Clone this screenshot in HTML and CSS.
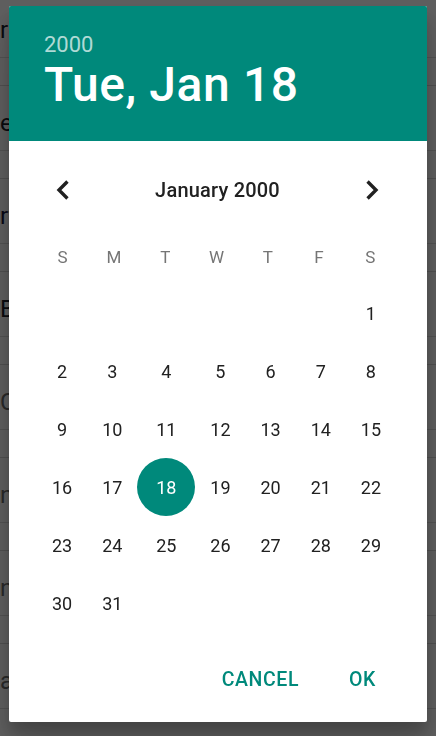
FILE: index.html
```html
<!DOCTYPE html>
<html lang="en">
<head>
    <meta charset="UTF-8">
    <meta name="viewport" content="width=device-width, initial-scale=1.0">
    <title>Pick a date</title>
    <link rel="stylesheet" href="styles.css">
</head>
<body>
    <!-- form behind the dialog -->
    <div class="form">
        <div class="row"><div class="label">r</div></div>
        <div class="row"><div class="label">e</div></div>
        <div class="row"><div class="label strong">rt</div></div>
        <div class="row"><div class="label">B</div></div>
        <div class="row"><div class="label hint">C</div></div>
        <div class="row"><div class="label hint">n</div></div>
        <div class="row"><div class="label hint">n</div></div>
        <div class="row"><div class="label hint">a</div></div>
    </div>

    <!-- date picker -->
    <div class="scrim">
        <div class="dialog">
            <div class="head">
                <div class="year">2000</div>
                <div class="today">Tue, Jan 18</div>
            </div>
            <div class="nav">
                <button class="arrow" aria-label="Previous month">
                    <svg viewBox="0 0 24 24" width="30" height="30"><polyline points="14.6 6.2 8.8 12 14.6 17.8"/></svg>
                </button>
                <div class="month">January 2000</div>
                <button class="arrow" aria-label="Next month">
                    <svg viewBox="0 0 24 24" width="30" height="30"><polyline points="9.4 6.2 15.2 12 9.4 17.8"/></svg>
                </button>
            </div>
            <div class="week">
                <span>S</span><span>M</span><span>T</span><span>W</span><span>T</span><span>F</span><span>S</span>
            </div>
            <div class="days" id="days"></div>
            <div class="actions">
                <button class="text-btn">CANCEL</button>
                <button class="text-btn">OK</button>
            </div>
        </div>
    </div>

    <script>
        // January 2000 starts on a Saturday
        var days = document.getElementById("days")
        var first = 6
        var selected = 18
        for(let i = 0; i < first; i++){
            days.innerHTML += "<span></span>"
        }
        for(let d = 1; d <= 31; d++){
            if(d == selected) days.innerHTML += "<span><b class=\"picked\">" + d + "</b></span>"
            else days.innerHTML += "<span>" + d + "</span>"
        }
    </script>
</body>
</html>
```

FILE: styles.css
```css
:root{
    --teal: #00897b;
    --text: #212121;
    --muted: #757575;
}
body {
    margin: 0;
    background: #ffffff;
    font-family: Roboto, "Noto Sans", sans-serif;
    color: var(--text);
    overflow: hidden;
}
.form{
    margin-top: -7px;
}
.row{
    height: 93px;
    box-sizing: border-box;
    border-bottom: 1px solid #d6d6d6;
    position: relative;
    display: flex;
    align-items: flex-start;
}
.row::after{
    content: "";
    position: absolute;
    left: 0;
    right: 0;
    top: 64px;
    border-top: 1px solid #dcdcdc;
}
.label{
    margin-top: 22px;
    font-size: 24px;
    line-height: 30px;
    color: #1c1c28;
}
.label.strong{
    color: #15163a;
}
.label.hint{
    color: #6c6c6c;
}
.scrim{
    position: fixed;
    inset: 0;
    background: rgba(0,0,0,.63);
    padding: 6px 9px;
}
.dialog{
    width: 418px;
    height: 716px;
    background: #ffffff;
    border-radius: 2px;
    overflow: hidden;
    box-shadow: 0 11px 15px rgba(0,0,0,.2), 0 24px 38px rgba(0,0,0,.14);
    display: flex;
    flex-direction: column;
}
.head{
    background: var(--teal);
    height: 135px;
    box-sizing: border-box;
    padding: 26px 35px 0;
}
.year{
    font-size: 22px;
    line-height: 26px;
    color: rgba(255,255,255,.7);
}
.today{
    font-size: 48px;
    line-height: 53px;
    font-weight: 500;
    letter-spacing: .6px;
    color: #ffffff;
}
.nav{
    margin-top: 25px;
    height: 48px;
    display: flex;
    align-items: center;
    justify-content: space-between;
    padding: 0 31px 0 30px;
}
.arrow{
    width: 48px;
    height: 48px;
    border: 0;
    padding: 0;
    background: none;
    display: flex;
    align-items: center;
    justify-content: center;
}
.arrow polyline{
    fill: none;
    stroke: #212121;
    stroke-width: 2.7;
    stroke-linecap: square;
}
.month{
    font-size: 20px;
    font-weight: 500;
    letter-spacing: .2px;
    color: var(--text);
}
.week, .days{
    display: grid;
    grid-template-columns: repeat(7, 1fr);
    padding: 0 31px 0 28px;
    text-align: center;
}
.week{
    margin-top: 16px;
    height: 54px;
    align-items: center;
    font-size: 17px;
    color: var(--muted);
}
.days{
    grid-auto-rows: 58px;
    font-size: 18px;
    color: var(--text);
}
.days span{
    display: flex;
    align-items: center;
    justify-content: center;
}
.picked{
    width: 58px;
    height: 58px;
    border-radius: 50%;
    background: var(--teal);
    color: #ffffff;
    font-weight: 400;
    display: flex;
    align-items: center;
    justify-content: center;
}
.actions{
    margin-top: auto;
    display: flex;
    justify-content: flex-end;
    gap: 26px;
    padding: 0 39px 25px 0;
}
.text-btn{
    height: 36px;
    border: 0;
    background: none;
    padding: 0 12px;
    font-family: Roboto, "Noto Sans", sans-serif;
    font-size: 19.5px;
    font-weight: 500;
    letter-spacing: .6px;
    color: var(--teal);
}
```
